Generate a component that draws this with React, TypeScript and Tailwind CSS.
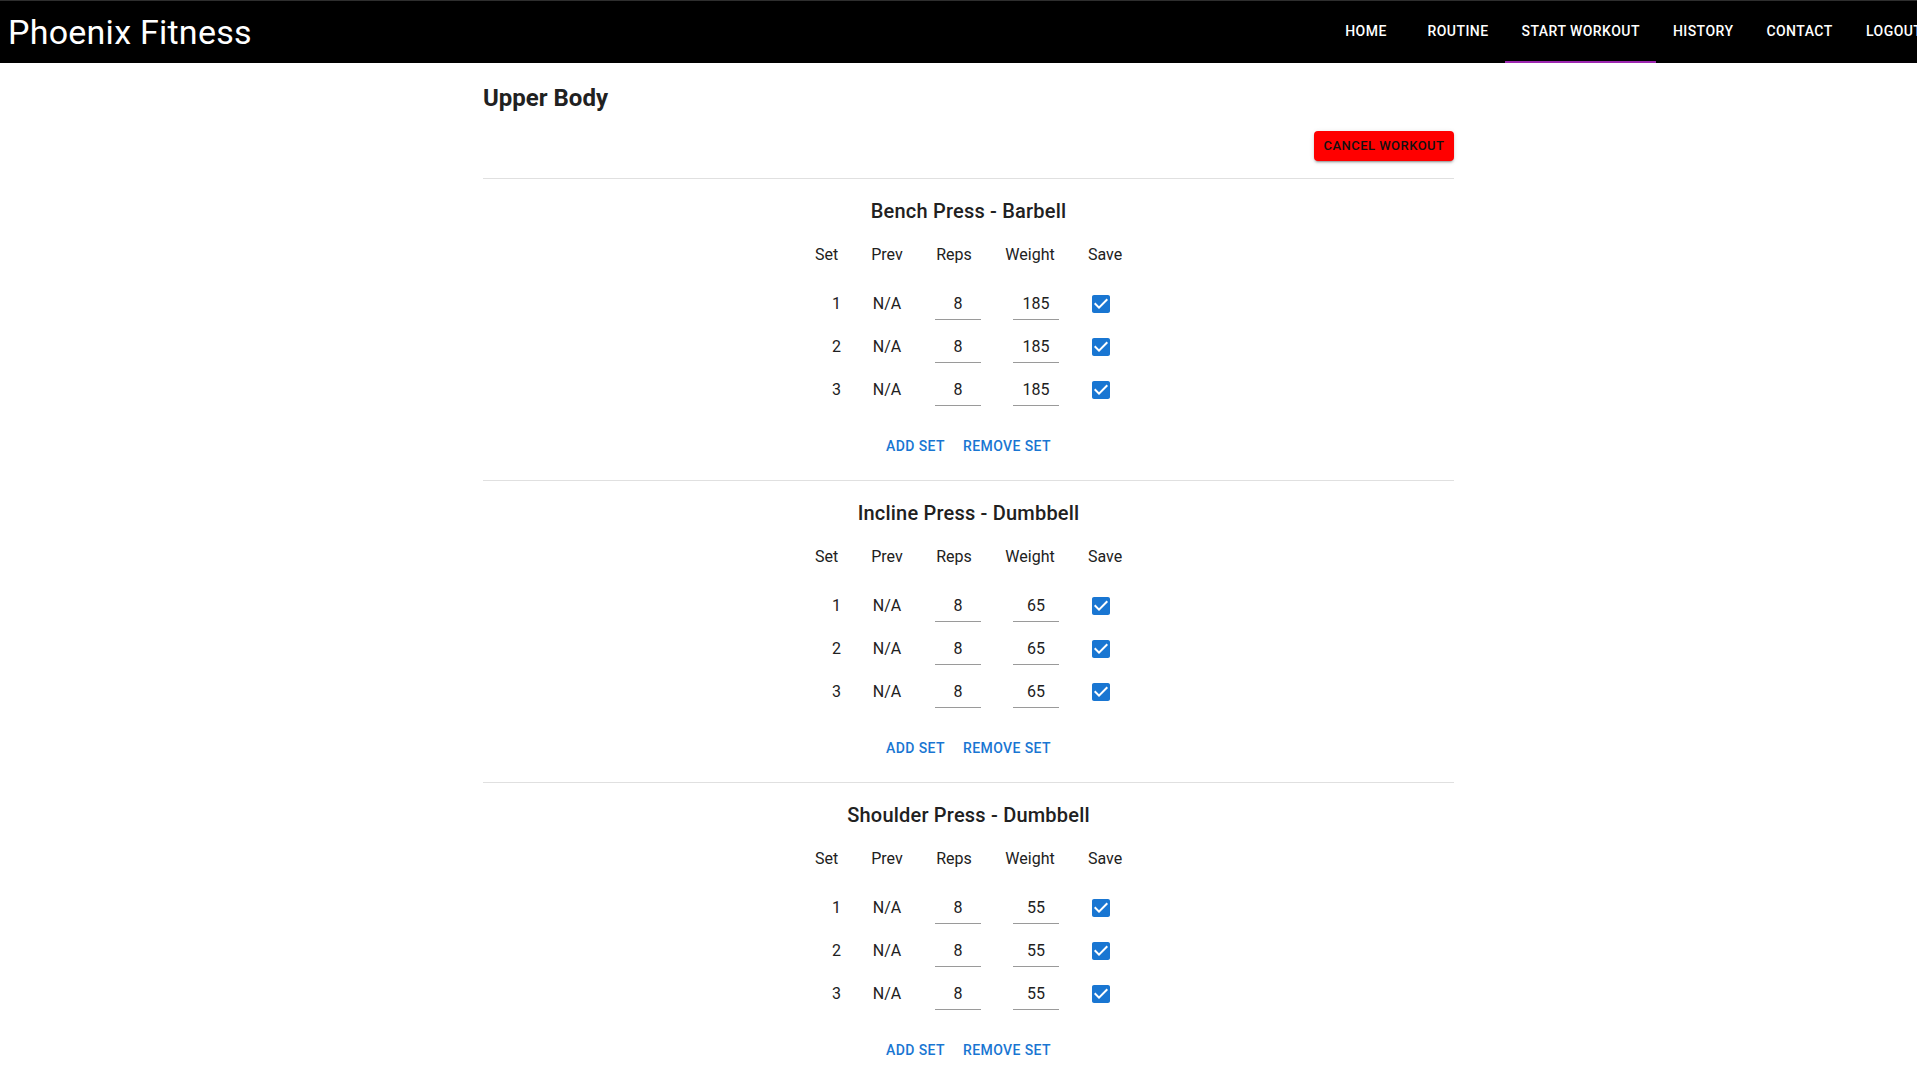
import React from 'react'

const TABS = ['Home', 'Routine', 'Start Workout', 'History', 'Contact', 'Logout']

const EXERCISES = [
  { name: 'Bench Press - Barbell', reps: 8, weight: 185 },
  { name: 'Incline Press - Dumbbell', reps: 8, weight: 65 },
  { name: 'Shoulder Press - Dumbbell', reps: 8, weight: 55 },
]

function CheckIcon() {
  return (
    <svg viewBox="0 0 24 24" className="w-6 h-6 fill-[#1976d2]">
      <path d="M19 3H5c-1.11 0-2 .9-2 2v14c0 1.1.89 2 2 2h14c1.11 0 2-.9 2-2V5c0-1.1-.89-2-2-2zm-9 14l-5-5 1.41-1.41L10 14.17l7.59-7.59L19 8l-9 9z" />
    </svg>
  )
}

function Header() {
  return (
    <header className="grid grid-cols-[1321px_auto] h-[63px] bg-black border-t border-[#2e2e2e] overflow-hidden text-white">
      <div className="flex items-center pl-[8px]">
        <h1 className="text-[34px] leading-none font-normal tracking-[0.25px]">Phoenix Fitness</h1>
      </div>
      <nav className="flex h-full w-max">
        {TABS.map((t) => (
          <div
            key={t}
            className={`flex items-center justify-center min-w-[90px] px-[16.5px] h-full border-b-2 text-[14px] font-medium tracking-[0.45px] uppercase whitespace-nowrap ${
              t === 'Start Workout' ? 'border-[#9c27b0]' : 'border-transparent'
            }`}
          >
            {t}
          </div>
        ))}
      </nav>
    </header>
  )
}

function SetRow({ n, reps, weight }: { n: number; reps: number; weight: number }) {
  const inputClass = 'w-[46px] h-[33px] border-b border-[#9a9a9a] text-center text-[16px] bg-transparent outline-none'
  return (
    <div className="flex h-[43px] items-center">
      <div className="w-[61px] text-right pr-[16px]">{n}</div>
      <div className="w-[60px] text-center">N/A</div>
      <div className="w-[74px] pl-[18px]">
        <input type="text" defaultValue={reps} className={inputClass} />
      </div>
      <div className="w-[78px] pl-[22px]">
        <input type="text" defaultValue={weight} className={inputClass} />
      </div>
      <div className="w-[72px] pl-[20px]">
        <CheckIcon />
      </div>
    </div>
  )
}

function ExerciseCard({ name, reps, weight }: { name: string; reps: number; weight: number }) {
  return (
    <section className="border-t border-[#e0e0e0]">
      <h2 className="pt-4 text-center text-[20px] leading-[32px] font-medium tracking-[0.2px]">{name}</h2>

      <div className="mt-4 ml-[313px] flex h-6 items-center leading-6">
        <div className="w-[61px] text-center">Set</div>
        <div className="w-[60px] text-center">Prev</div>
        <div className="w-[74px] text-center">Reps</div>
        <div className="w-[78px] text-center">Weight</div>
        <div className="w-[72px] text-center">Save</div>
      </div>

      <div className="mt-[15px] ml-[313px]">
        {[1, 2, 3].map((n) => (
          <SetRow key={n} n={n} reps={reps} weight={weight} />
        ))}
      </div>

      <div className="mt-[17px] mb-4 flex justify-center gap-[2px]">
        <button className="h-9 px-2 min-w-[64px] text-[14px] font-medium tracking-[0.4px] text-[#1976d2] uppercase">Add Set</button>
        <button className="h-9 px-2 min-w-[64px] text-[14px] font-medium tracking-[0.4px] text-[#1976d2] uppercase">Remove Set</button>
      </div>
    </section>
  )
}

export default function App() {
  return (
    <div className="min-h-screen bg-white font-['Roboto',sans-serif] text-[16px] text-[#212121]">
      <Header />
      <main className="ml-[483px] w-[971px]">
        <h3 className="mt-[19px] text-[24px] leading-[32px] font-bold">Upper Body</h3>
        <div className="mt-[17px] mb-[17px] flex justify-end">
          <button className="h-[30px] w-[140px] rounded bg-[#ff0000] text-[13px] font-medium tracking-[0.46px] uppercase text-[#111] shadow-[0_3px_1px_-2px_rgba(0,0,0,0.2),0_2px_2px_0_rgba(0,0,0,0.14),0_1px_5px_0_rgba(0,0,0,0.12)]">
            Cancel Workout
          </button>
        </div>
        {EXERCISES.map((ex) => (
          <ExerciseCard key={ex.name} {...ex} />
        ))}
      </main>
    </div>
  )
}
